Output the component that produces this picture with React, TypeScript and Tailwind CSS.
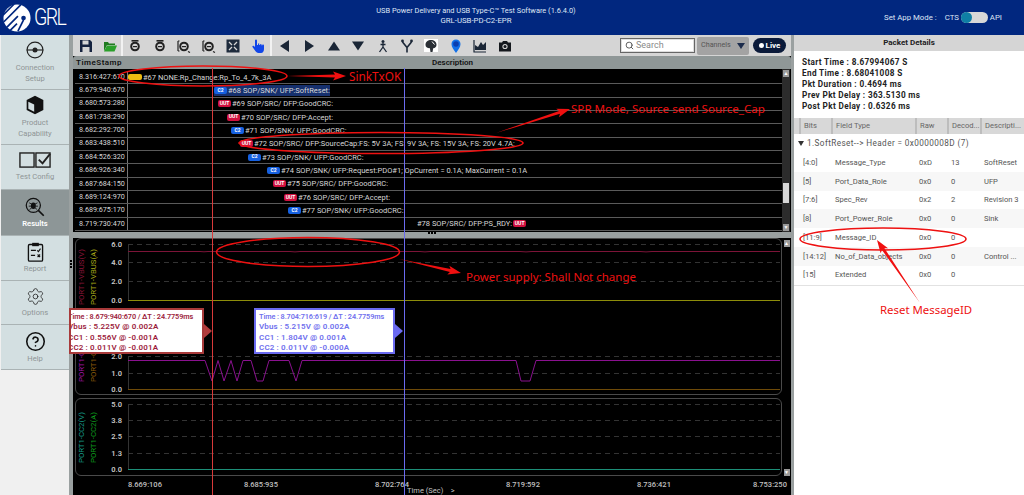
import React from "react";
import { Settings, CircleHelp, Search } from "lucide-react";

type Badge = "C2" | "UUT" | "Y" | null;
const rows: { t: string; x: number; b: Badge; m: string; sel?: boolean; after?: boolean }[] = [
  { t: "8.316:427:670", x: 53, b: "Y", m: "#67 NONE:Rp_Change:Rp_To_4_7k_3A" },
  { t: "8.679:940:670", x: 139, b: "C2", m: "#68 SOP/SNK/ UFP:SoftReset:", sel: true },
  { t: "8.680:573:280", x: 143, b: "UUT", m: "#69 SOP/SRC/ DFP:GoodCRC:" },
  { t: "8.681:738:290", x: 152, b: "UUT", m: "#70 SOP/SRC/ DFP:Accept:" },
  { t: "8.682:292:700", x: 156, b: "C2", m: "#71 SOP/SNK/ UFP:GoodCRC:" },
  { t: "8.683:438:510", x: 165, b: "UUT", m: "#72 SOP/SRC/ DFP:SourceCap:FS: 5V 3A; FS: 9V 3A; FS: 15V 3A; FS: 20V 4.7A;" },
  { t: "8.684:526:320", x: 173, b: "C2", m: "#73 SOP/SNK/ UFP:GoodCRC:" },
  { t: "8.686:926:340", x: 192, b: "C2", m: "#74 SOP/SNK/ UFP:Request:PDO#1; OpCurrent = 0.1A; MaxCurrent = 0.1A" },
  { t: "8.687:684:150", x: 198, b: "UUT", m: "#75 SOP/SRC/ DFP:GoodCRC:" },
  { t: "8.689:124:970", x: 209, b: "UUT", m: "#76 SOP/SRC/ DFP:Accept:" },
  { t: "8.689:675:170", x: 213, b: "C2", m: "#77 SOP/SNK/ UFP:GoodCRC:" },
  { t: "8.719:730:470", x: 342, b: null, m: "#78 SOP/SRC/ DFP:PS_RDY:", after: true },
];

const fields = [
  ["[4:0]", "Message_Type", "0xD", "13", "SoftReset"],
  ["[5]", "Port_Data_Role", "0x0", "0", "UFP"],
  ["[7:6]", "Spec_Rev", "0x2", "2", "Revision 3"],
  ["[8]", "Port_Power_Role", "0x0", "0", "Sink"],
  ["[11:9]", "Message_ID", "0x0", "0", ""],
  ["[14:12]", "No_of_Data_objects", "0x0", "0", "Control ..."],
  ["[15]", "Extended", "0x0", "0", ""],
];

function Chip({ b }: { b: Badge }) {
  if (b === "Y") return <span className="inline-block w-[14px] h-[6px] rounded-[2px] bg-[#eebb11] shrink-0" />;
  if (b === "C2")
    return <span className="inline-flex items-center justify-center w-[13px] h-[7px] rounded-[2px] bg-[#1560e0] text-white text-[5px] font-bold shrink-0">C2</span>;
  if (b === "UUT")
    return <span className="inline-flex items-center justify-center w-[13px] h-[7px] rounded-[2px] bg-[#d0103f] text-white text-[5px] font-bold shrink-0">UUT</span>;
  return null;
}

function NavItem({ label, icon, h, active }: { label: string; icon: React.ReactNode; h: string; active?: boolean }) {
  return (
    <div className={`${h} ${active ? "bg-[#8d9697] text-white font-semibold" : "bg-[#d3dfe1] text-[#8f9596]"} border-b border-[#aab3b4] flex flex-col items-center justify-center text-[7.600px] leading-[11px]`}>
      {icon}
      {label}
    </div>
  );
}

const Tb = ({ children }: { children: React.ReactNode }) => (
  <svg viewBox="0 0 14 14" className="w-[14px] h-[14px] shrink-0">{children}</svg>
);

function Zoom({ kind }: { kind: number }) {
  return (
    <Tb>
      <circle cx="7" cy="7.500" r="3.800" fill="none" stroke="#222" strokeWidth="2" />
      <rect x="5" y="7" width="4" height="1.200" fill="#222" />
      {kind < 2 ? <rect x="3.500" y="1" width="7" height="1.600" fill="#222" /> : null}
      {kind >= 2 ? <path d="M1 2v10M1 2h1.500M1 12h1.500M11 12.500l2 1" stroke="#222" strokeWidth="1.200" /> : null}
    </Tb>
  );
}

function Toolbar() {
  return (
    <div className="h-[21px] bg-[#d5d5d5] flex items-center shrink-0 relative">
      <div className="w-[50px] flex items-center gap-[10px] pl-[6px] h-full border-r-2 border-[#f2f2f2]">
        <Tb>
          <path d="M1 1h10l2 2v10H1z" fill="#16233f" />
          <rect x="3.500" y="1.500" width="6" height="4" fill="#d5d5d5" />
          <rect x="3.500" y="8" width="7" height="5" fill="#d5d5d5" />
        </Tb>
        <Tb>
          <path d="M1 3h4l1 1.500h6V6H4L1 12z" fill="#1f7a1f" />
          <path d="M4 6.500h10L11.500 12.500H1z" fill="#2aa02a" />
        </Tb>
      </div>
      <div className="w-[149px] flex items-center gap-[10.600px] pl-[5px] h-full border-r-2 border-[#f2f2f2]">
        <Zoom kind={0} />
        <Zoom kind={1} />
        <Zoom kind={2} />
        <Zoom kind={3} />
        <Tb>
          <rect x="0.500" y="0.500" width="13" height="13" fill="#1e2b3c" />
          <path d="M3 3l3 3M11 3L8 6M3 11l3-3M11 11L8 8" stroke="#d5d5d5" strokeWidth="1.300" />
        </Tb>
        <Tb>
          <path d="M4 1.500a1 1 0 0 1 2 0V6h1V4.500h1.200V6h1V5h1.200v1.200h1V5.600c1-.3 1.600.2 1.600 1V10c0 2-1 4-3 4H7.500C6 14 5 13 4 11.500L1.500 8c-.5-.9.5-1.800 1.400-1.100L4 8z" fill="#1146e8" />
        </Tb>
      </div>
      <div className="flex items-center gap-[10.400px] pl-[6px] h-full">
        <Tb><path d="M11 1v12L2 7z" fill="#1a2636" /></Tb>
        <Tb><path d="M3 1v12l9-6z" fill="#1a2636" /></Tb>
        <Tb><path d="M1 11.500h12L7 2.500z" fill="#1a2636" /></Tb>
        <Tb><path d="M1 2.500h12L7 11.500z" fill="#1a2636" /></Tb>
        <Tb>
          <circle cx="7" cy="2.500" r="1.500" fill="#1a2636" />
          <path d="M7 4v4M7 8l-3.500 5M7 8l3.500 5M4.500 5.500h5" stroke="#1a2636" strokeWidth="1.300" fill="none" />
        </Tb>
        <Tb>
          <circle cx="2.500" cy="2" r="1.400" fill="#1a2636" />
          <circle cx="11.500" cy="2" r="1.400" fill="#1a2636" />
          <path d="M2.500 3L7 8.500 11.500 3M7 8.500V13.500" stroke="#1a2636" strokeWidth="1.600" fill="none" />
        </Tb>
        <span className="w-[14px] h-[13px] bg-white flex items-center justify-center shrink-0">
          <Tb>
            <path d="M7 1c3 0 5.500 2 5.500 4.800 0 2.200-1.500 3.200-3.300 3.500L8.500 13h-2l-.6-3.700C3 9 1.500 8 1.500 5.800 1.500 3 4 1 7 1z" fill="#2a2f35" />
            <path d="M8 2.500l2.500 3" stroke="#fff" strokeWidth="1" />
          </Tb>
        </span>
        <Tb>
          <path d="M7 14C4.500 10.500 2.500 8 2.500 5a4.500 4.500 0 0 1 9 0c0 3-2 5.500-4.500 9z" fill="#1170e8" />
          <circle cx="7" cy="5" r="2.800" fill="#0a3fb0" />
        </Tb>
        <Tb>
          <path d="M1 1v12h12" fill="none" stroke="#1a2636" strokeWidth="1.200" />
          <path d="M2 11V6l3 2 3-5 2 3 3-3v8z" fill="#1a2636" />
        </Tb>
        <Tb>
          <path d="M1 3.500h3l1-1.500h4l1 1.500h3V12.500H1z" fill="#14181d" />
          <circle cx="7" cy="7.500" r="2.600" fill="#d5d5d5" />
          <circle cx="7" cy="7.500" r="1.500" fill="#14181d" />
        </Tb>
      </div>
      <div className="ml-auto flex items-center h-full pr-[5px]">
        <div className="w-[75px] h-[15px] bg-white border border-[#666] shadow-[inset_0_0_0_1px_#ddd] flex items-center gap-[2px] pl-[4px] text-[9px] text-[#8a8a8a]">
          <Search size={9} strokeWidth={2.500} className="text-[#555]" />
          Search
        </div>
        <div className="ml-[2px] w-[52px] h-[18px] bg-[#a3a3a3] rounded-[2px] flex items-center justify-between px-[4px] text-[7.200px] text-[#555]">
          Channels
          <span className="w-0 h-0 border-l-[4px] border-r-[4px] border-t-[6px] border-l-transparent border-r-transparent border-t-[#1c2c4c]" />
        </div>
        <div className="ml-[4px] w-[33px] h-[15px] rounded-full bg-[#0a1a3a] flex items-center justify-center gap-[2px] text-[8px] font-bold text-white">
          <span className="w-[5px] h-[5px] rounded-full bg-white" />
          Live
        </div>
      </div>
    </div>
  );
}

function Table() {
  return (
    <div className="h-[176px] bg-black flex flex-col shrink-0">
      <div className="h-[13px] bg-[#8f9797] flex items-center text-[8px] font-semibold text-[#111] rounded-t-[3px] shrink-0">
        <span className="w-[55px] pl-[3px] tracking-[0.5px]">TimeStamp</span>
        <span className="pl-[304px]">Description</span>
      </div>
      <div className="flex flex-1 min-h-0">
        <div className="flex-1 flex flex-col pt-[2px] pl-[2px]">
          {rows.map((r) => (
            <div key={r.t} className="h-[13.350px] border-b border-[#5a5a5a] flex items-center text-[7.500px] text-[#d8d8d8] whitespace-nowrap">
              <span className="w-[53px] border-r border-[#777] h-full flex items-center pl-[4px] shrink-0 text-[7.200px]">{r.t}</span>
              <span className={`flex items-center gap-[1px] ${r.sel ? "bg-[#16306e]" : ""}`} style={{ marginLeft: r.x - 53 }}>
                <Chip b={r.b} />
                {r.m}
                {r.after ? <Chip b="UUT" /> : null}
              </span>
            </div>
          ))}
        </div>
        <div className="w-[8px] bg-[#2c2c2c] flex flex-col items-center justify-between mr-[1px] py-[1px] relative">
          <span className="w-[6px] h-[7px] bg-[#999] flex items-center justify-center text-[5px] text-white">▲</span>
          <span className="absolute top-[114px] left-[1px] w-[6px] h-[20px] bg-[#d8d8d8]" />
          <span className="w-[6px] h-[7px] bg-[#999] flex items-center justify-center text-[5px] text-white">▼</span>
        </div>
      </div>
    </div>
  );
}

const Grid = ({ ys, lab }: { ys: number[]; lab: string[] }) => (
  <g>
    {ys.map((y, i) => (
      <g key={y}>
        <line x1="128" x2="780" y1={y} y2={y} stroke="#333" strokeWidth="1" strokeDasharray="5 4" />
        <text x="122" y={y + 2.500} textAnchor="end" fontSize="7.500" fill="#c8c8c8" fontWeight="600">{lab[i]}</text>
      </g>
    ))}
    <line x1="128.500" x2="128.500" y1={ys[0]} y2={ys[ys.length - 1]} stroke="#333" strokeWidth="1" />
  </g>
);

const Legend = ({ x, y, c, t }: { x: number; y: number; c: string; t: string }) => (
  <text transform={`translate(${x} ${y}) rotate(-90)`} fontSize="7.800" fill={c}>{t}</text>
);

const ticks = [
  { t: "8.669:106", c: "mr-[85px]" },
  { t: "8.685:935", c: "mr-[100px]" },
  { t: "8.702:764", c: "mr-[100px]" },
  { t: "8.719:592", c: "mr-[100px]" },
  { t: "8.736:421", c: "mr-[85px]" },
  { t: "8.753:250", c: "" },
];

function Charts() {
  const wave = "128,360.5 205,360.5 212,381 218,360.5 224,381 231,360.5 237,381 243,360.5 251,360.5 257,381 263,381 269,360.5 289,360.5 296,381 302,360.5 516,360.5 521,381 530,381 536,360.5 780,360.5";
  return (
    <div className="flex-1 bg-black flex flex-col relative min-h-0">
      <div className="pl-[2px] pr-[9px] flex flex-col gap-[3px]">
        <div className="h-[157px] border border-[#4a4a4a] rounded-[6px] overflow-hidden">
          <svg viewBox="76 239 705 155" className="w-[705px] h-[155px] block">
            <Grid ys={[244.500, 262.500, 281.500, 300.500]} lab={["6.0", "4.0", "2.0", "0.0"]} />
            <Grid ys={[356.500, 373.500, 389.500]} lab={["2.0", "1.0", "0.0"]} />
            <path d="M128 251.500H200q4 .6 8 0H290q5 .8 10 0H420q5 .8 10 0H520q6 .8 12 0H640q6 .8 12 0H780" fill="none" stroke="#7c1438" strokeWidth="1" />
            <line x1="128" x2="780" y1="300.500" y2="300.500" stroke="#8d8d0a" strokeWidth="1" />
            <polyline points={wave} fill="none" stroke="#8a118f" strokeWidth="1" />
            <line x1="128" x2="780" y1="389.500" y2="389.500" stroke="#6e4a08" strokeWidth="1" />
            <Legend x={84} y={305} c="#8a1438" t="PORT1-VBUS(V)" />
            <Legend x={96} y={305} c="#a8a818" t="PORT1-VBUS(A)" />
            <Legend x={84} y={382} c="#a014a8" t="PORT1-CC1(V)" />
            <Legend x={96} y={382} c="#8a5a0a" t="PORT1-CC1(A)" />
          </svg>
        </div>
        <div className="h-[78px] border border-[#4a4a4a] rounded-[6px] overflow-hidden">
          <svg viewBox="76 399 705 76" className="w-[705px] h-[76px] block">
            <Grid ys={[404.500, 420.500, 436.500, 453.500, 469.500]} lab={["5.0", "3.8", "2.5", "1.3", "0.0"]} />
            <line x1="128" x2="780" y1="469.500" y2="469.500" stroke="#1d8f78" strokeWidth="1" />
            <Legend x={84} y={463} c="#159a88" t="PORT1-CC2(V)" />
            <Legend x={96} y={463} c="#0d9a1d" t="PORT1-CC2(A)" />
          </svg>
        </div>
      </div>
      <div className="h-[19px] relative text-[7.500px] text-[#c0c0c0] font-medium pl-[55px]">
        <div className="flex pt-[3px]">
          {ticks.map((k) => (
            <span key={k.t} className={`w-[31px] whitespace-nowrap ${k.c}`}>{k.t}</span>
          ))}
        </div>
        <span className="absolute left-[334px] top-[9px] font-normal whitespace-nowrap">Time (Sec) &nbsp; &nbsp;&gt;</span>
      </div>
      <div className="absolute right-[1px] top-0 bottom-[19px] w-[7px] flex flex-col justify-between items-center pt-[2px]">
        <span className="w-[6px] h-[7px] bg-[#999] text-[5px] text-white flex items-center justify-center">▲</span>
        <span className="w-[6px] h-[7px] bg-[#999] text-[5px] text-white flex items-center justify-center">▼</span>
      </div>
    </div>
  );
}

function Tip({ lines, cls, tri, pos, shift }: { lines: string[]; cls: string; tri: string; pos: string; shift: string }) {
  return (
    <div className={`absolute top-[308px] ${pos} flex items-center`}>
      <div className={`h-[46px] border-2 bg-white overflow-hidden text-[8px] font-semibold leading-[10.300px] py-[2px] whitespace-nowrap ${cls}`}>
        {lines.map((l, i) => (
          <div key={l} className={`${shift} ${i === 0 ? "text-[7.300px] tracking-[-0.1px]" : "tracking-[0.15px]"}`}>{l}</div>
        ))}
      </div>
      <span className={`w-0 h-0 border-y-[7px] border-y-transparent border-l-[8px] ${tri}`} />
    </div>
  );
}

function Head({ t, w }: { t: string; w: string }) {
  return <div className={`${w} border-l-2 border-[#bdbdbd] pl-[3px] h-full flex items-center overflow-hidden whitespace-nowrap`}>{t}</div>;
}

function Details() {
  return (
    <div className="w-[230px] bg-white flex flex-col text-[#555]">
      <div className="h-[16px] bg-[#d5d5d5] flex items-center justify-center text-[8px] font-bold text-[#222] shrink-0">Packet Details</div>
      <div className="pt-[6px] pl-[8px] text-[8.200px] font-bold text-[#222] leading-[11px] h-[67px] tracking-[0.35px] shrink-0">
        <div>Start Time : 8.67994067 S</div>
        <div>End Time : 8.68041008 S</div>
        <div>Pkt Duration : 0.4694 ms</div>
        <div>Prev Pkt Delay : 363.5130 ms</div>
        <div>Post Pkt Delay : 0.6326 ms</div>
      </div>
      <div className="h-[16px] bg-[#d8d8d8] flex items-center pl-[5px] text-[7.600px] text-[#666] shrink-0">
        <Head t="Bits" w="w-[32px]" />
        <Head t="Field Type" w="w-[84px]" />
        <Head t="Raw" w="w-[32px]" />
        <Head t="Decod..." w="w-[33px]" />
        <Head t="Descripti..." w="w-[44px]" />
      </div>
      <div className="h-[19px] flex items-center pl-[4px] gap-[3px] text-[8.200px] tracking-[0.4px] shrink-0">
        <span className="w-0 h-0 border-x-[3px] border-x-transparent border-t-[5px] border-t-[#333]" />
        1.SoftReset--&gt; Header = 0x0000008D (7)
      </div>
      {fields.map((f, i) => (
        <div key={f[0]} className={`h-[18.800px] flex items-center pl-[9px] text-[7.600px] shrink-0 ${i % 2 ? "bg-[#f7f7f7]" : "bg-white"}`}>
          <span className="w-[32px]">{f[0]}</span>
          <span className="w-[84px]">{f[1]}</span>
          <span className="w-[32px]">{f[2]}</span>
          <span className="w-[33px]">{f[3]}</span>
          <span className="whitespace-nowrap">{f[4]}</span>
        </div>
      ))}
      <div className="border-t border-[#e2e2e2]" />
    </div>
  );
}

function Arrow({ x1, y1, x2, y2 }: { x1: number; y1: number; x2: number; y2: number }) {
  const L = Math.hypot(x2 - x1, y2 - y1);
  const a = (Math.atan2(y2 - y1, x2 - x1) * 180) / Math.PI;
  return (
    <path
      d={`M0 0L${L - 11} -1.500L${L - 13} -4.500L${L} 0L${L - 13} 4.500L${L - 11} 1.500Z`}
      fill="#f01010"
      transform={`translate(${x1} ${y1}) rotate(${a})`}
    />
  );
}

function Overlay() {
  return (
    <svg viewBox="0 0 1024 495" className="absolute inset-0 w-[1024px] h-[495px] pointer-events-none">
      <line x1="212.500" x2="212.500" y1="68" y2="495" stroke="#d83a3a" strokeWidth="1" />
      <line x1="404.500" x2="404.500" y1="68" y2="495" stroke="#6a6af0" strokeWidth="1" />
      <g fill="none" stroke="#ee1111" strokeWidth="1.600">
        <ellipse cx="203" cy="76" rx="84" ry="10" />
        <ellipse cx="381" cy="143" rx="142" ry="10.500" />
        <ellipse cx="308" cy="252" rx="91.500" ry="14.500" />
        <ellipse cx="883" cy="239" rx="83" ry="11" />
      </g>
      <Arrow x1={287} y1={76} x2={346} y2={76} />
      <Arrow x1={496} y1={133} x2={570} y2={109} />
      <Arrow x1={399} y1={259} x2={461} y2={273} />
      <Arrow x1={920} y1={303} x2={877} y2={240} />
      <g fill="#ee1111" fontFamily="'Noto Sans', sans-serif">
        <text x="349" y="80.500" fontSize="11.800">SinkTxOK</text>
        <text x="571" y="113" fontSize="11.600">SPR Mode, Source send Source_Cap</text>
        <text x="466" y="281" fontSize="11.500">Power supply: Shall Not change</text>
        <text x="880" y="314" fontSize="11.400">Reset MessageID</text>
      </g>
    </svg>
  );
}

export default function App() {
  return (
    <div className="w-[1024px] h-[495px] relative overflow-hidden flex flex-col font-['Roboto',sans-serif] bg-[#f0f0f0]">
      <header className="h-[35px] bg-[#01277f] relative flex items-center shrink-0 text-white">
        <div className="flex items-center pl-[3px] gap-[3px]">
          <svg viewBox="0 0 30 30" className="w-[28px] h-[28px]">
            <circle cx="15" cy="15" r="14.500" fill="#fff" />
            <path d="M0 12L12 0M1 19L19 1M4 25L16 13M8 28L15 21" stroke="#01277f" strokeWidth="1.800" />
            <path d="M16 29L22 17" stroke="#01277f" strokeWidth="1.800" />
            <circle cx="22" cy="15" r="2.500" fill="#01277f" />
          </svg>
          <span className="text-[23px] leading-none tracking-[-2px] font-light scale-x-[.85] origin-left">GRL</span>
        </div>
        <div className="absolute left-[276px] w-[400px] top-[6px] text-center leading-[10px] text-[#dfe6f5]">
          <div className="text-[7.400px]">USB Power Delivery and USB Type-C™ Test Software (1.6.4.0)</div>
          <div className="text-[7.800px]">GRL-USB-PD-C2-EPR</div>
        </div>
        <div className="ml-auto pr-[22px] flex items-center text-[7.800px] text-[#dfe6f5]">
          <span>Set App Mode :</span>
          <span className="ml-[8px]">CTS</span>
          <span className="mx-[2px] w-[27px] h-[11px] rounded-full bg-[#d8d8d8] relative">
            <span className="absolute left-0 top-0 w-[11px] h-[11px] rounded-full bg-[#0f7fa5]" />
          </span>
          <span>API</span>
        </div>
      </header>
      <div className="flex-1 flex min-h-0">
        <aside className="w-[69px] pl-[1px] flex flex-col shrink-0">
          <NavItem
            h="h-[55px]"
            label=""
            icon={
              <div className="flex flex-col items-center text-center">
                <svg viewBox="0 0 24 24" className="w-[20px] h-[20px] mb-[2px]">
                  <circle cx="12" cy="12" r="9.500" fill="none" stroke="#222" strokeWidth="1.400" />
                  <path d="M2 12h20" stroke="#222" strokeWidth="1.400" />
                  <circle cx="12" cy="12" r="3" fill="#222" />
                </svg>
                Connection<br />Setup
              </div>
            }
          />
          <NavItem
            h="h-[55px]"
            label=""
            icon={
              <div className="flex flex-col items-center text-center">
                <svg viewBox="0 0 24 24" className="w-[20px] h-[20px] mb-[2px]">
                  <path d="M12 1l10 5v12l-10 5-10-5V6z" fill="#111" />
                  <path d="M4 8l7 3.500V20l-7-3.500z" fill="#d3dfe1" />
                </svg>
                Product<br />Capability
              </div>
            }
          />
          <NavItem
            h="h-[45px]"
            label="Test Config"
            icon={
              <svg viewBox="0 0 34 18" className="w-[32px] h-[17px] mb-[2px]">
                <rect x="1" y="1" width="15" height="15" fill="none" stroke="#222" strokeWidth="1.500" />
                <rect x="18" y="1" width="15" height="15" fill="none" stroke="#222" strokeWidth="1.500" />
                <path d="M21 8l4 4 8-10" fill="none" stroke="#222" strokeWidth="2" />
              </svg>
            }
          />
          <NavItem
            h="h-[46px]"
            active
            label="Results"
            icon={
              <svg viewBox="0 0 24 24" className="w-[20px] h-[20px] mb-[1px]">
                <circle cx="10" cy="10" r="8.500" fill="none" stroke="#111" strokeWidth="1.500" />
                <path d="M16 16l6.500 6.500" stroke="#111" strokeWidth="2" />
                <ellipse cx="10" cy="10.500" rx="3" ry="4" fill="#111" />
                <path d="M5 7l3 1.500M15 7l-3 1.500M4.500 11h3M15.500 11h-3M5.500 15l2.500-2M14.500 15l-2.500-2" stroke="#111" strokeWidth="1" />
              </svg>
            }
          />
          <NavItem
            h="h-[45px]"
            label="Report"
            icon={
              <svg viewBox="0 0 20 24" className="w-[17px] h-[20px] mb-[1px]">
                <rect x="1.500" y="3" width="17" height="20" rx="1.500" fill="none" stroke="#111" strokeWidth="1.600" />
                <rect x="6" y="1" width="8" height="4" fill="#111" />
                <path d="M4.500 10h6M4.500 16h5" stroke="#111" strokeWidth="1.500" />
                <path d="M12 10l1.500 1.500L16 8M12.500 15l3 3M15.500 15l-3 3" fill="none" stroke="#111" strokeWidth="1.300" />
              </svg>
            }
          />
          <NavItem h="h-[44px]" label="Options" icon={<Settings size={19} strokeWidth={1} className="text-[#222] mb-[1px]" />} />
          <NavItem h="h-[45px]" label="Help" icon={<CircleHelp size={21} strokeWidth={1.800} className="text-[#111] mb-[1px]" />} />
          <div className="flex-1" />
        </aside>
        <div className="w-[4px] bg-[#9aa0a0] shrink-0 flex flex-col items-center justify-center gap-[1px] pb-[2px]">
          <span className="w-[2px] h-[2px] bg-black" />
          <span className="w-[2px] h-[2px] bg-black" />
          <span className="w-[2px] h-[2px] bg-black" />
        </div>
        <main className="w-[718px] flex flex-col shrink-0 min-h-0">
          <Toolbar />
          <Table />
          <div className="h-[6px] bg-[#9aa0a0] shrink-0 flex items-start justify-center gap-[1px]">
            <span className="w-[2px] h-[2px] bg-black" />
            <span className="w-[2px] h-[2px] bg-black" />
            <span className="w-[2px] h-[2px] bg-black" />
          </div>
          <Charts />
        </main>
        <div className="w-[3px] bg-[#9aa0a0] shrink-0" />
        <Details />
      </div>
      <Overlay />
      <Tip
        pos="left-[69px]"
        cls="w-[135px] border-[#a83a3a] text-[#9c1c3c]"
        tri="border-l-[#b03c3c]"
        shift="ml-[-3px]"
        lines={["Time : 8.679:940:670 / ΔT : 24.7759ms", "Vbus : 5.225V @ 0.002A", "CC1 : 0.556V @ -0.001A", "CC2 : 0.011V @ -0.001A"]}
      />
      <Tip
        pos="left-[254px]"
        cls="w-[141px] border-[#6a6af0] text-[#7070ee]"
        tri="border-l-[#6a6af0]"
        shift="ml-[3px]"
        lines={["Time : 8.704:716:619 / ΔT : 24.7759ms", "Vbus : 5.215V @ 0.002A", "CC1 : 1.804V @ 0.001A", "CC2 : 0.011V @ -0.000A"]}
      />
    </div>
  );
}
